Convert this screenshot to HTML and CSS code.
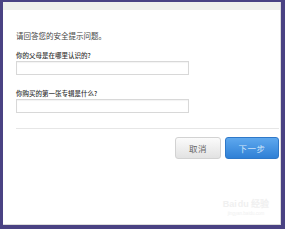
FILE: index.html
```html
<!DOCTYPE html>
<html lang="zh-CN">
<head>
<meta charset="utf-8">
<link rel="stylesheet" href="styles.css">
</head>
<body>
<div class="frame">
  <div class="window">
    <div class="band"></div>
    <div class="content">
      <div class="title">请回答您的安全提示问题。</div>
      <div class="label label-first">你的父母是在哪里认识的?</div>
      <div class="input"></div>
      <div class="label label-second">你购买的第一张专辑是什么?</div>
      <div class="input"></div>
      <div class="divider"></div>
      <div class="actions">
        <div class="btn btn-cancel">取消</div>
        <div class="btn btn-next">下一步</div>
      </div>
    </div>
    <div class="watermark">
      <div class="wm-logo">Bai<span class="wm-paw">du</span> 经验</div>
      <div class="wm-url">jingyan.baidu.com</div>
    </div>
  </div>
</div>
</body>
</html>
```
FILE: styles.css
```css
html, body {
  margin: 0;
  padding: 0;
}
body {
  width: 285px;
  height: 229px;
  background: #4a4283;
  font-family: "Noto Sans CJK SC", "Noto Sans", sans-serif;
  overflow: hidden;
}
.frame {
  padding: 2px 4px 4px 3px;
  height: 229px;
  box-sizing: border-box;
}
.window {
  position: relative;
  background: #fff;
  height: 223px;
  border-right: 1px solid #dcdcdc;
  border-bottom: 1px solid #dcdcdc;
  box-sizing: border-box;
}
.band {
  height: 8px;
  background: #efefec;
}
.content {
  padding: 0 1px 0 13px;
}
.title {
  margin-top: 20px;
  font-size: 7.5px;
  line-height: 12px;
  height: 12px;
  color: #444;
}
.label {
  font-size: 6.5px;
  line-height: 10px;
  height: 10px;
  color: #333;
  font-weight: 500;
}
.label-first {
  margin-top: 8px;
}
.label-second {
  margin-top: 13px;
}
.input {
  margin-top: 1px;
  width: 173px;
  height: 14px;
  box-sizing: border-box;
  border: 1px solid #d8d8d8;
  box-shadow: inset 0 1px 1px rgba(0,0,0,0.05);
  background: #fff;
}
.divider {
  margin-top: 15px;
  height: 1px;
  background: #e6e6e6;
}
.actions {
  margin-top: 8px;
  display: flex;
  justify-content: flex-end;
  gap: 4px;
}
.btn {
  height: 22px;
  box-sizing: border-box;
  border-radius: 3px;
  font-size: 8.5px;
  line-height: 20px;
  text-align: center;
  letter-spacing: 0.5px;
}
.btn-cancel {
  width: 46px;
  border: 1px solid #d2d2d2;
  background: linear-gradient(#fbfbfb, #e2e2e2);
  color: #666;
}
.btn-next {
  width: 54px;
  border: 1px solid #2f78c8;
  background: linear-gradient(#5ea8ee, #2f80d6);
  color: #d6e8fa;
}
.watermark {
  position: absolute;
  left: 216px;
  top: 196px;
  width: 54px;
  text-align: center;
  color: #f0f0f0;
}
.wm-logo {
  font-size: 9px;
  line-height: 13px;
  font-weight: bold;
  font-family: "Liberation Sans", sans-serif;
}
.wm-paw {
  margin-left: 1px;
}
.wm-url {
  font-size: 4.5px;
  line-height: 6px;
  font-family: "Liberation Sans", sans-serif;
}
```
